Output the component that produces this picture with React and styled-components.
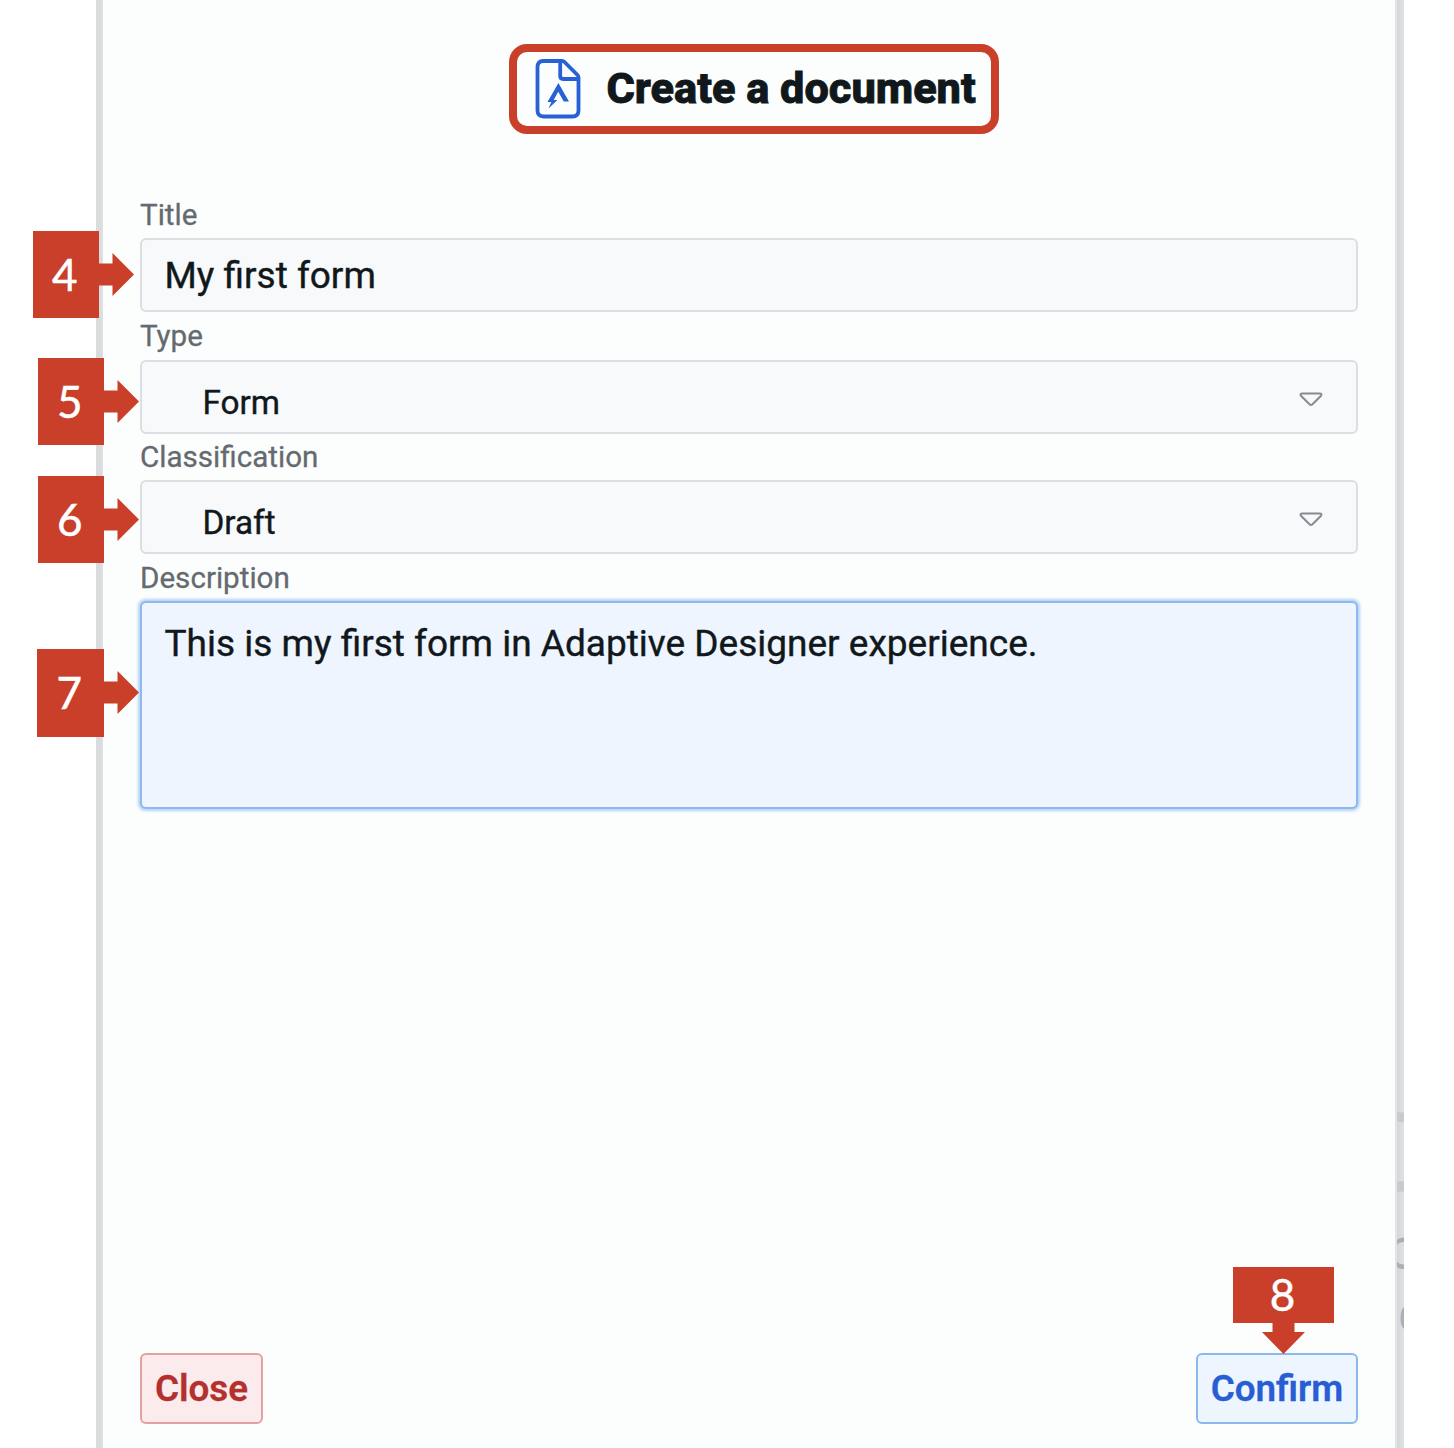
import React from "react";
import styled, { createGlobalStyle, css } from "styled-components";

const RED = "#ca3f2a";

const GlobalStyle = createGlobalStyle`
  * { box-sizing: border-box; }
  body {
    margin: 0;
    background: #fff;
    font-family: Roboto, "Liberation Sans", sans-serif;
    color: #11181c;
  }
`;

const Page = styled.div`
  display: flex;
  width: 1454px;
  height: 1448px;
  padding-left: 96px;
  overflow: hidden;
  background: #fff;
`;

const LeftEdge = styled.div`
  width: 7px;
  background: linear-gradient(90deg, #d9dbdd 0 4px, #dfe1e5 7px);
`;

const RightEdge = styled.div`
  width: 9px;
  background: linear-gradient(90deg, #e2e4e7 0 2px, #d4d6d8 2px, #dfe0e2 8px);
  svg { display: block; }
`;

const Dialog = styled.main`
  display: flex;
  flex-direction: column;
  width: 1292px;
  padding: 44px 37px 24px;
  background: #fcfefd;
`;

const Header = styled.header`
  display: flex;
  align-items: center;
  align-self: center;
  width: 490px;
  height: 90px;
  margin-left: 10px;
  padding-left: 18px;
  border: 8px solid ${RED};
  border-radius: 18px;
`;

const Heading = styled.h1`
  margin: 0 0 0 25.5px;
  font-size: 43.3px;
  font-weight: 800;
  line-height: 60px;
  white-space: nowrap;
  -webkit-text-stroke: 0.9px currentColor;
`;

const Form = styled.form`
  display: flex;
  flex-direction: column;
  flex: 1;
  margin-top: 56px;
`;

const Field = styled.div`
  display: flex;
  flex-direction: column;
`;

const Label = styled.label`
  height: ${(p) => p.$height || 48}px;
  line-height: ${(p) => p.$line || 48}px;
  font-size: 29.6px;
  color: #646a70;
  -webkit-text-stroke: 0.3px currentColor;
`;

const Control = styled.div`
  position: relative;
  display: flex;
  width: 1218px;
  height: 74px;
  border: 2px solid #dcdee3;
  border-radius: 6px;
  background: #f8f9fb;
  ${(p) =>
    p.$focused &&
    css`
      height: 208px;
      border-color: #8fb8ee;
      background: #eef5ff;
      box-shadow: 0 0 3px 1.5px #b4d2f8;
    `}
`;

const Value = styled.span`
  padding-left: 22.5px;
  font-size: 37px;
  line-height: ${(p) => p.$line || 72}px;
  white-space: nowrap;
  -webkit-text-stroke: 0.4px currentColor;
`;

const Selected = styled.span`
  flex: 1;
  padding: 6px 0 0 60.5px;
  font-size: 33.3px;
  line-height: 70px;
  -webkit-text-stroke: 0.4px currentColor;
`;

const Caret = styled.svg`
  width: 24px;
  height: 15px;
  margin: 29.5px 33px 0 0;
`;

const Actions = styled.footer`
  display: flex;
  justify-content: space-between;
`;

const Button = styled.button`
  position: relative;
  width: ${(p) => p.$width}px;
  height: 71px;
  padding: 0;
  border: 2px solid ${(p) => (p.$danger ? "#e5a0a1" : "#8db8ed")};
  border-radius: 6px;
  background: ${(p) => (p.$danger ? "#fcebec" : "#edf5ff")};
  color: ${(p) => (p.$danger ? "#b3302f" : "#285dd4")};
  font: 600 36.8px/67px Roboto, sans-serif;
  -webkit-text-stroke: 0.3px currentColor;
`;

const Marker = styled.div`
  position: absolute;
  left: ${(p) => p.$left}px;
  top: ${(p) => p.$top}px;
  display: flex;
  align-items: center;
  flex-direction: ${(p) => (p.$down ? "column" : "row")};
  svg { display: block; flex: none; }
`;

const Digit = styled.span`
  width: ${(p) => (p.$down ? 101 : p.$width)}px;
  height: ${(p) => (p.$down ? 56 : p.$height)}px;
  padding-right: ${(p) => (p.$down ? 2 : 2.5)}px;
  background: ${RED};
  color: #fff;
  font: 400 44px/${(p) => (p.$down ? 55 : 86)}px Lato, sans-serif;
  -webkit-text-stroke: 0.5px currentColor;
  text-align: center;
`;

function Callout({ n, left, top, down, width = 66, height = 87 }) {
  return (
    <Marker $left={left} $top={top} $down={down}>
      <Digit $down={down} $width={width} $height={height}>{n}</Digit>
      {down ? (
        <svg width="43" height="31" viewBox="0 0 43 31">
          <path d="M10.5 0H32.5V9H43L21.5 31L0 9H10.5Z" fill={RED} />
        </svg>
      ) : (
        <svg width="35" height="43" viewBox="0 0 35 43">
          <path d="M0 10.5H13.5V0L35 21.5L13.5 43V32.5H0Z" fill={RED} />
        </svg>
      )}
    </Marker>
  );
}

function DocumentIcon() {
  return (
    <svg width="46" height="60" viewBox="0 0 46 60" fill="none">
      <path
        d="M8 2H27Q28.5 2 29.5 3L42.5 16Q43.5 17 43.5 18.5V51.5Q43.5 57.5 37.5 57.5H8.5Q2.5 57.5 2.5 51.5V8Q2.5 2 8 2Z"
        stroke="#2860d6"
        strokeWidth="3.8"
        strokeLinejoin="round"
      />
      <path d="M25.2 2V17Q25.2 20 28.2 20H43" stroke="#2860d6" strokeWidth="3.8" />
      <path
        d="M23.4 24L34 42.5H28.8L23.2 32.8L18.7 41H22.4L13.5 49.5L16.4 43H12.5Z"
        fill="#2860d6"
      />
    </svg>
  );
}

function Select({ value, children }) {
  return (
    <Control>
      <Selected>{value}</Selected>
      <Caret viewBox="0 0 24 15" fill="none">
        <path
          d="M3 1.5H21Q23.5 2 21.8 4L13.2 12.5Q12 13.5 10.8 12.5L2.2 4Q.5 2 3 1.5Z"
          stroke="#858b91"
          strokeWidth="2"
        />
      </Caret>
      {children}
    </Control>
  );
}

export default function App() {
  return (
    <>
      <GlobalStyle />
      <Page>
        <LeftEdge />
        <Dialog>
          <Header>
            <DocumentIcon />
            <Heading>Create a document</Heading>
          </Header>
          <Form>
            <Field>
              <Label $line={50}>Title</Label>
              <Control>
                <Value>My first form</Value>
                <Callout n="4" left={-109} top={-9} />
              </Control>
            </Field>
            <Field>
              <Label>Type</Label>
              <Select value="Form">
                <Callout n="5" left={-104} top={-4} />
              </Select>
            </Field>
            <Field>
              <Label $height={46.4} $line={46.4}>Classification</Label>
              <Select value="Draft">
                <Callout n="6" left={-104} top={-6.4} />
              </Select>
            </Field>
            <Field>
              <Label $height={46.4} $line={48}>Description</Label>
              <Control $focused>
                <Value $line={82}>This is my first form in Adaptive Designer experience.</Value>
                <Callout n="7" left={-105} top={46.2} width={67} height={88} />
              </Control>
            </Field>
          </Form>
          <Actions>
            <Button type="button" $danger $width={123}>Close</Button>
            <Button type="button" $width={162}>
              Confirm
              <Callout n="8" left={35} top={-88} down />
            </Button>
          </Actions>
        </Dialog>
        <RightEdge>
          <svg width="9" height="1448" viewBox="0 0 9 1448" fill="none">
            <path d="M2 1112L9 1112.5V1122.5L2 1121.5Z" fill="#c8cacd" />
            <path d="M2 1182L9 1181V1191.5L2 1192Z" fill="#c8cacd" />
            <path d="M2 1240Q4 1237.5 9 1237.5V1242Q4 1242 2 1245ZM2 1261.5Q4 1264.5 9 1264.5V1269Q4 1269 2 1267Z" fill="#aab0b5" />
            <path d="M9 1307Q5.5 1310 5.5 1318T9 1329Z" fill="#aab0b5" />
          </svg>
        </RightEdge>
      </Page>
    </>
  );
}
